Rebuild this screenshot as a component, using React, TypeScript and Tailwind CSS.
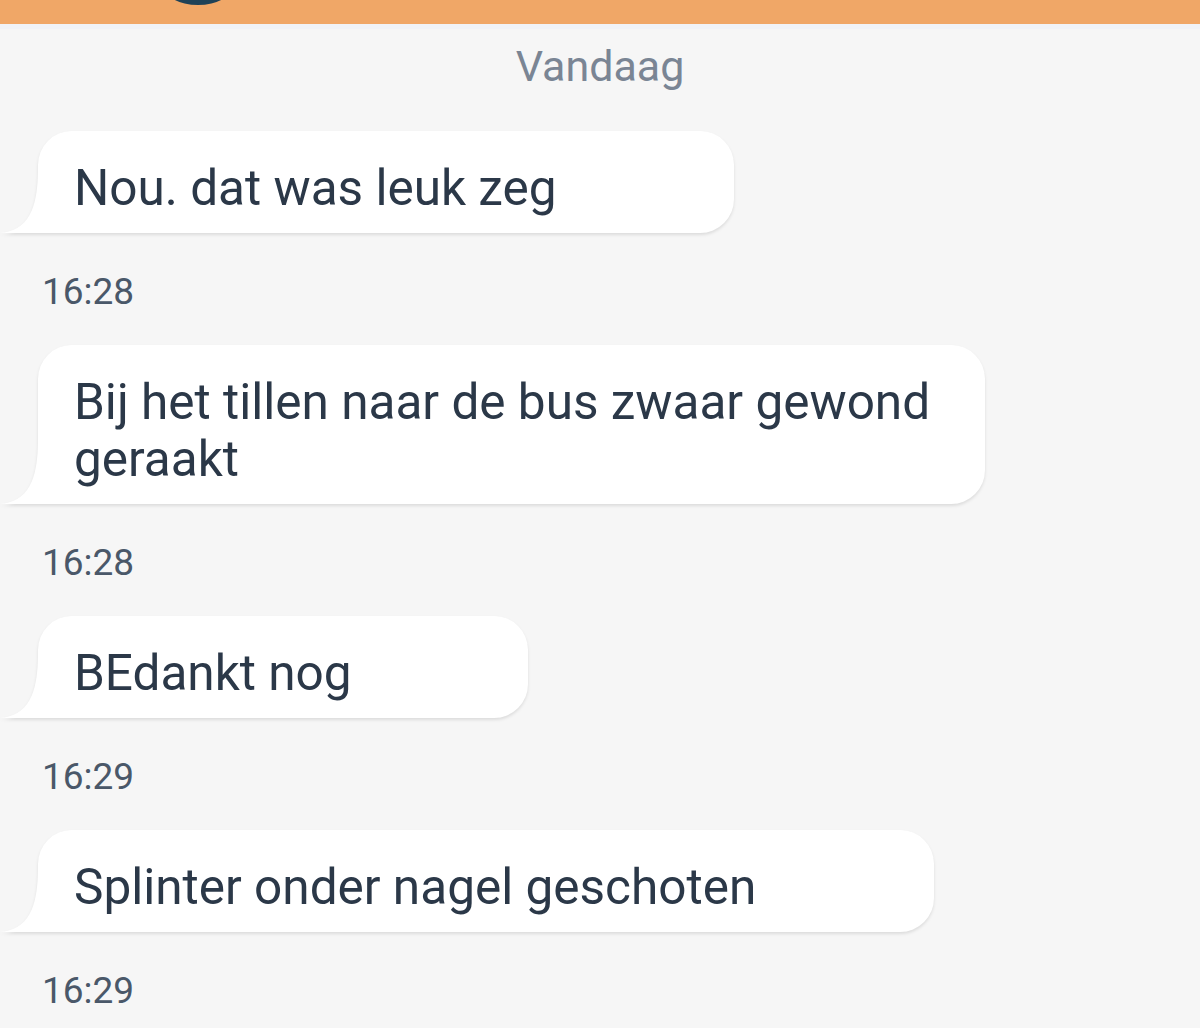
import React from "react";

const font = { fontFamily: "Roboto, 'Noto Sans', sans-serif" };

function Bubble({ width, lines }: { width: number; lines: string[] }) {
  return (
    <div className="pl-[38px] drop-shadow-[0_2px_1.5px_rgba(0,0,0,0.10)]">
      <div className="relative">
        <svg
          className="absolute left-[-38px] bottom-0"
          width="40"
          height="64"
          viewBox="0 0 40 64"
        >
          <path d="M40 0 L38 0 C38 40 28 62 0 64 L40 64 Z" fill="#ffffff" />
        </svg>
        <div
          className="bg-white rounded-[34px] rounded-bl-none pl-[36px] pt-[29px] pb-[16px] text-[49.5px] leading-[57px] text-[#2b3848]"
          style={{ width }}
        >
          {lines.map((l, i) => (
            <div key={i} className="whitespace-nowrap">
              {l}
            </div>
          ))}
        </div>
      </div>
    </div>
  );
}

function Time({ t }: { t: string }) {
  return (
    <div className="pl-[42px] text-[37px] leading-[44px] text-[#4a5869] pt-[37px] pb-[31px]">
      {t}
    </div>
  );
}

export default function App() {
  return (
    <div className="w-[1200px] h-[1028px] bg-[#f6f6f6] overflow-hidden" style={font}>
      <div className="h-[24px] bg-[#f0a767] overflow-hidden flex items-end">
        <div className="ml-[163px] mb-[19px] w-[70px] h-[40px] rounded-[50%] bg-[#1f4257] shrink-0" />
        <div className="ml-[30px] text-[30px] leading-[34px] text-[#fde9d2] translate-y-[-29px]">
          14:31
        </div>
      </div>
      <div className="h-[5px] bg-[#f1f3f7]" />
      <div className="text-center text-[43px] leading-[50px] text-[#7a8594] pt-[12px] pb-[40px]">
        Vandaag
      </div>
      <Bubble width={696} lines={["Nou. dat was leuk zeg"]} />
      <Time t="16:28" />
      <Bubble width={947} lines={["Bij het tillen naar de bus zwaar gewond", "geraakt"]} />
      <Time t="16:28" />
      <Bubble width={490} lines={["BEdankt nog"]} />
      <Time t="16:29" />
      <Bubble width={896} lines={["Splinter onder nagel geschoten"]} />
      <Time t="16:29" />
    </div>
  );
}
